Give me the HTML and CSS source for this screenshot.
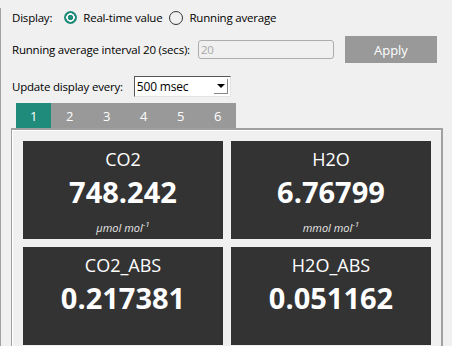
FILE: index.html
```html
<!DOCTYPE html>
<html lang="en">
  <head>
    <meta charset="UTF-8" />
    <title>Display</title>
    <link rel="stylesheet" href="styles.css">
  </head>
  <body>
    <div class="window">
      <div class="row row-display">
        <span class="label">Display:</span>
        <span class="radio checked"></span>
        <span class="radio-label">Real-time value</span>
        <span class="radio"></span>
        <span class="radio-label">Running average</span>
      </div>

      <div class="row row-interval">
        <span class="label">Running average interval 20 (secs):</span>
        <div class="text-input">20</div>
        <button class="apply-btn">Apply</button>
      </div>

      <div class="row row-update">
        <span class="label">Update display every:</span>
        <div class="select">
          <span class="select-value">500 msec</span>
          <span class="select-arrow"></span>
        </div>
      </div>

      <div class="tabs">
        <div class="tab active">1</div>
        <div class="tab">2</div>
        <div class="tab">3</div>
        <div class="tab">4</div>
        <div class="tab">5</div>
        <div class="tab">6</div>
      </div>

      <div class="panel">
        <div class="card">
          <div class="card-title">CO2</div>
          <div class="card-value">748.242</div>
          <div class="card-unit">µmol mol<sup>-1</sup></div>
        </div>
        <div class="card">
          <div class="card-title">H2O</div>
          <div class="card-value">6.76799</div>
          <div class="card-unit">mmol mol<sup>-1</sup></div>
        </div>
        <div class="card">
          <div class="card-title">CO2_ABS</div>
          <div class="card-value">0.217381</div>
          <div class="card-unit"></div>
        </div>
        <div class="card">
          <div class="card-title">H2O_ABS</div>
          <div class="card-value">0.051162</div>
          <div class="card-unit"></div>
        </div>
      </div>
    </div>
  </body>
</html>
```

FILE: styles.css
```css
:root {
  --bg-color: #f0f0f0;
  --teal: #1f8b7b;
  --gray: #999999;
  --edge: #a0a0a0;
  --card-bg: #333333;
}

* {
  box-sizing: border-box;
}

body {
  margin: 0;
  background-color: var(--bg-color);
  font-family: "Open Sans", sans-serif;
  font-size: 11.5px;
  letter-spacing: -0.2px;
  color: #000;
  height: 346px;
  overflow: hidden;
}

.window {
  height: 100%;
  border-left: 1px solid var(--edge);
  padding-left: 11px;
}

.row {
  display: flex;
  align-items: center;
}

.row-display {
  height: 19px;
  margin-top: 8px;
}

.row-interval {
  height: 27px;
  margin-top: 9px;
}

.row-update {
  height: 20px;
  margin-top: 13px;
}

.label {
  white-space: nowrap;
}

.radio {
  width: 14px;
  height: 14px;
  border-radius: 50%;
  border: 1px solid #333;
  background: var(--bg-color);
  margin-left: 7px;
  margin-right: 6px;
}

.radio.checked {
  border: none;
  background: radial-gradient(circle, var(--teal) 0 2.5px, #fff 3px 4px, var(--teal) 4.5px);
}

.row-display .radio:nth-of-type(2) {
  margin-left: 12px;
  width: 13px;
  height: 13px;
}

.text-input {
  width: 136px;
  height: 19px;
  margin-left: 8px;
  border: 1px solid #adadad;
  border-radius: 3px;
  color: #a8a8a8;
  padding-left: 2px;
  line-height: 17px;
}

.apply-btn {
  width: 92px;
  height: 27px;
  margin-left: 11px;
  border: none;
  background: var(--gray);
  color: #fff;
  font-family: "Open Sans", sans-serif;
  font-size: 13px;
}

.select {
  display: flex;
  align-items: center;
  width: 97px;
  height: 21px;
  margin-left: 11px;
  background: #fff;
  border-top: 1px solid #555;
  border-left: 1px solid #555;
  border-right: 1px solid #e3e3e3;
  border-bottom: 1px solid #e3e3e3;
  padding-left: 2px;
  font-size: 12px;
}

.select-value {
  flex-grow: 1;
}

.select-arrow {
  width: 14px;
  height: 15px;
  margin-right: 2px;
  border-right: 1px solid #888;
  border-bottom: 1px solid #888;
  position: relative;
}

.select-arrow::after {
  content: "";
  position: absolute;
  left: 3px;
  top: 5px;
  border-left: 4px solid transparent;
  border-right: 4px solid transparent;
  border-top: 4px solid #000;
}

.tabs {
  display: flex;
  margin-top: 7px;
  margin-left: 4px;
  height: 25px;
}

.tab {
  width: 37px;
  background: var(--gray);
  color: #fff;
  font-size: 13px;
  display: flex;
  align-items: center;
  justify-content: center;
}

.tab.active {
  width: 35px;
  background: var(--teal);
}

.panel {
  width: 432px;
  margin-left: -1px;
  border-top: 2px solid var(--edge);
  border-left: 1px solid var(--edge);
  border-right: 2px solid var(--edge);
  box-shadow: inset 1px 1px 0 #fff;
  padding: 11px 10px 0 11px;
  display: grid;
  grid-template-columns: 200px 200px;
  align-content: start;
  column-gap: 8px;
  row-gap: 8px;
  height: 230px;
  letter-spacing: 0;
}

.card {
  background: var(--card-bg);
  color: #fff;
  height: 98px;
  text-align: center;
  padding-top: 6px;
}

.card-title {
  font-size: 18px;
  line-height: 24px;
}

.card-value {
  font-size: 29px;
  font-weight: bold;
  line-height: 42px;
}

.card-unit {
  font-size: 11px;
  font-style: italic;
  line-height: 16px;
  margin-top: 7px;
  color: #e8e8e8;
}

.card-unit sup {
  font-size: 8px;
  line-height: 0;
}
```
